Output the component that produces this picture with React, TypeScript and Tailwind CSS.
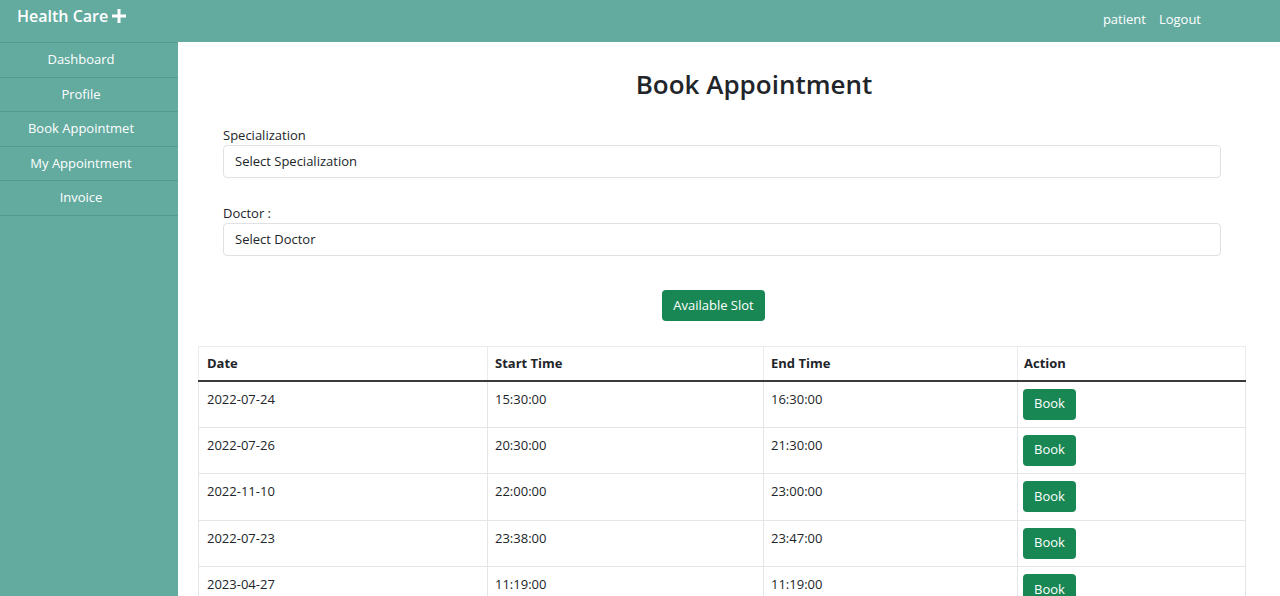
const menu = ["Dashboard", "Profile", "Book Appointmet", "My Appointment", "Invoice"];

const slots = [
  { date: "2022-07-24", start: "15:30:00", end: "16:30:00" },
  { date: "2022-07-26", start: "20:30:00", end: "21:30:00" },
  { date: "2022-11-10", start: "22:00:00", end: "23:00:00" },
  { date: "2022-07-23", start: "23:38:00", end: "23:47:00" },
  { date: "2023-04-27", start: "11:19:00", end: "11:19:00" },
];

export default function App() {
  return (
    <div className="h-[596px] overflow-hidden bg-white font-['Open_Sans',sans-serif] text-[#212529]">
      <header className="flex h-[42px] items-start justify-between bg-[#63ab9f] text-white">
        <div className="flex items-center gap-[3px] pl-[17px] pt-[4px] text-[16px] font-semibold">
          Health Care
          <svg width="16" height="16" viewBox="0 0 16 16">
            <path d="M6.5 1h3v5.5H15v3H9.5V15h-3V9.5H1v-3h5.5z" fill="white" />
          </svg>
        </div>
        <nav className="flex gap-[13px] pr-[79px] pt-[10px] text-[13px]">
          <span>patient</span>
          <span>Logout</span>
        </nav>
      </header>

      <div className="flex">
        <aside className="h-[554px] w-[178px] shrink-0 border-t border-[#57998e] bg-[#63ab9f]">
          {menu.map((m) => (
            <div
              key={m}
              className="flex h-[34.6px] items-center justify-center border-b border-[#57998e] pr-[16px] text-[13px] text-white"
            >
              {m}
            </div>
          ))}
        </aside>

        <main className="flex-1 pl-[20px] pr-[34px]">
          <h1 className="pt-[25px] pl-[64px] text-center text-[26px] font-semibold leading-[34px]">Book Appointment</h1>

          <div className="mt-[24px] px-[25px] pr-[25px]">
            <label className="block text-[13px] leading-[20px]">Specialization</label>
            <div className="flex h-[33px] items-center rounded-[4px] border border-[#dee2e6] px-[11px] text-[13px]">
              Select Specialization
            </div>

            <label className="mt-[25px] block text-[13px] leading-[20px]">Doctor :</label>
            <div className="flex h-[33px] items-center rounded-[4px] border border-[#dee2e6] px-[11px] text-[13px]">
              Select Doctor
            </div>

            <div className="mt-[34px] flex justify-center pr-[17px]">
              <button className="h-[31px] rounded-[4px] bg-[#198754] px-[11px] text-[13px] text-white">
                Available Slot
              </button>
            </div>
          </div>

          <table className="mt-[25px] w-[1048px] border-collapse text-[13px]">
            <thead>
              <tr className="h-[34px] border-b-2 border-b-[#3a3a3a]">
                <th className="w-[289px] border border-[#e9ecef] border-b-[#3a3a3a] px-[8px] text-left font-bold">Date</th>
                <th className="w-[276px] border border-[#e9ecef] border-b-[#3a3a3a] px-[7px] text-left font-bold">Start Time</th>
                <th className="w-[254px] border border-[#e9ecef] border-b-[#3a3a3a] px-[7px] text-left font-bold">End Time</th>
                <th className="border border-[#e9ecef] border-b-[#3a3a3a] px-[6px] text-left font-bold">Action</th>
              </tr>
            </thead>
            <tbody>
              {slots.map((s) => (
                <tr key={s.date + s.start} className="h-[46.5px]">
                  <td className="border border-[#e3e6e9] px-[8px] pt-[8px] align-top">{s.date}</td>
                  <td className="border border-[#e3e6e9] px-[7px] pt-[8px] align-top">{s.start}</td>
                  <td className="border border-[#e3e6e9] px-[7px] pt-[8px] align-top">{s.end}</td>
                  <td className="border border-[#e3e6e9] px-[5px] pt-[7px] pb-[6px] align-top">
                    <button className="h-[31px] rounded-[4px] bg-[#198754] px-[11px] text-[13px] text-white">
                      Book
                    </button>
                  </td>
                </tr>
              ))}
            </tbody>
          </table>
        </main>
      </div>
    </div>
  );
}
